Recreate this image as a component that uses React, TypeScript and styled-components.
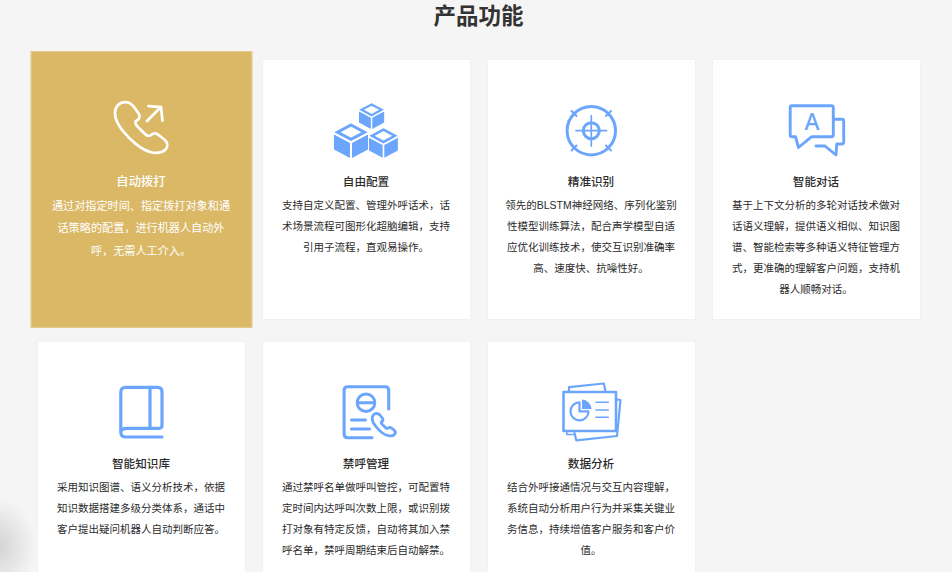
import React from 'react';
import styled, { createGlobalStyle } from 'styled-components';

const BLUE = '#6ba6fc';

const GlobalStyle = createGlobalStyle`
  html, body {
    margin: 0;
    padding: 0;
    background: #f5f5f5;
  }
  svg {
    overflow: visible;
  }
`;

const Page = styled.div`
  position: relative;
  width: 952px;
  height: 572px;
  overflow: hidden;
  background: #f5f5f5;
  font-family: "Liberation Sans", "Noto Sans CJK SC", sans-serif;
`;

const Section = styled.section`
  width: 883px;
  margin-left: 37px;
`;

const Heading = styled.h2`
  margin: 0;
  height: 59px;
  padding-top: 2px;
  box-sizing: border-box;
  text-align: center;
  font-size: 22.5px;
  line-height: 30px;
  font-weight: 700;
  color: #333;
`;

const Grid = styled.div`
  display: grid;
  grid-template-columns: repeat(4, 209px);
  grid-auto-rows: 261px;
  column-gap: 16px;
  row-gap: 21px;
`;

const Card = styled.article<{ $active?: boolean }>`
  box-sizing: border-box;
  padding: 40px 20px 0 19px;
  text-align: center;
  background: ${({ $active }) => ($active ? '#dbb866' : '#fff')};
  border: 1px solid ${({ $active }) => ($active ? '#e4cb8f' : '#f1f1f1')};
  color: ${({ $active }) => ($active ? '#fff' : '#2b2b2b')};
  transform: ${({ $active }) => ($active ? 'scale(1.06)' : 'none')};
`;

const IconWrap = styled.div`
  height: 60px;
  display: flex;
  justify-content: center;
`;

const Title = styled.h3`
  margin: 9px 0 0;
  font-size: 11.6px;
  line-height: 25px;
  font-weight: 500;
`;

const Body = styled.p`
  margin: 1px -3px 0;
  font-size: 10.5px;
  line-height: 21px;
  font-weight: 400;
`;

const CornerShade = styled.div`
  position: absolute;
  left: -40px;
  bottom: -22px;
  width: 76px;
  height: 96px;
  border-radius: 50%;
  background: radial-gradient(closest-side, #d4d4d4 0%, #e2e2e2 45%, #f5f5f5 100%);
`;

const phonePath =
  'M125 102C129 102 132 104 134 107L139 114C140.5 117 139 119.5 136 121C135 122 135.5 124 137 126L145 134C147 136 149 136.5 151 135C153 133.5 156 133 158 134.5L165 140C168 143 168 147 165.5 149.5C163 152 158 153.5 152 152.5C142 150.5 130 140 123 131C118 125 115 119 115 113C115 107 119 102 125 102Z';

const PhoneIcon = () => (
  <svg width="60" height="60" viewBox="109.2 94.6 63.6 63.6" fill="none" stroke="#fff" strokeLinecap="round" strokeLinejoin="round">
    <path d={phonePath} strokeWidth="2.7" />
    <path d="M147 121L161 107M148.5 106L161 107L162.5 120.5" strokeWidth="2.8" />
  </svg>
);

const Cube = ({ x, y, s }: { x: number; y: number; s: number }) => (
  <g transform={`translate(${x} ${y}) scale(${s})`}>
    <polygon points="17,2 30.5,9.2 17,16.4 3.5,9.2" fill="#fff" stroke={BLUE} strokeWidth="3" />
    <polygon points="0,11.5 16,20 16,35 0,26.5" fill={BLUE} />
    <polygon points="18,20 34,11.5 34,26.5 18,35" fill={BLUE} />
  </g>
);

const CubesIcon = () => (
  <svg width="60" height="60" viewBox="336 100 60 60">
    <Cube x={359} y={103} s={0.74} />
    <Cube x={334} y={123} s={1} />
    <Cube x={369} y={128} s={0.85} />
  </svg>
);

const TargetIcon = () => (
  <svg width="60" height="60" viewBox="561 100 60 60" fill="none" stroke={BLUE} strokeLinecap="round">
    <circle cx="591.3" cy="130.7" r="24.2" strokeWidth="3" />
    <circle cx="591.3" cy="130.7" r="8" strokeWidth="3" />
    <path d="M576 130.7H606.5M591.3 115.5V146" strokeWidth="1.7" />
    <path d="M571.5 111L576.5 116M611 111L606 116M571.5 150.5L576.5 145.5M611 150.5L606 145.5" strokeWidth="2" />
  </svg>
);

const ChatIcon = () => (
  <svg width="60" height="60" viewBox="786 100 60 60" fill="none" stroke={BLUE} strokeWidth="2.9" strokeLinecap="round" strokeLinejoin="round">
    <path d="M792 105.7H831.5Q833.3 105.7 833.3 107.5V135Q833.3 136.7 831.5 136.7H811.7L798.5 147.5L795.5 136.7H792Q790.2 136.7 790.2 135V107.5Q790.2 105.7 792 105.7Z" />
    <path d="M833.3 119.3H842Q843.7 119.3 843.7 121V142Q843.7 144 842 144H836.8L836 155L825 146H816" />
    <text x="812" y="130" textAnchor="middle" fontSize="23" fontWeight="500" fontFamily="'Noto Sans', sans-serif" fill={BLUE} stroke="none">
      A
    </text>
  </svg>
);

const BookIcon = () => (
  <svg width="60" height="60" viewBox="111 382 60 60" fill="none" stroke={BLUE} strokeWidth="3.2" strokeLinecap="round" strokeLinejoin="round">
    <path d="M162 437H126C123 437 120.8 435.5 120.8 432.5V392C120.8 389 122.8 387.3 125.5 387.3H157.5C160.5 387.3 162 389 162 392V425.5C162 427.5 161 428.3 159 428.3H127C123 428.3 120.8 430 120.8 432.5" />
    <path d="M150 387.3V428.3" />
  </svg>
);

const RecordIcon = () => (
  <svg width="60" height="60" viewBox="336 382 60 60" fill="none" stroke={BLUE} strokeLinecap="round" strokeLinejoin="round">
    <path d="M388.7 409V390.5Q388.7 386.8 385 386.8H347.8Q344.1 386.8 344.1 390.5V434Q344.1 437.7 347.8 437.7H372" strokeWidth="3.1" />
    <circle cx="366" cy="402.7" r="8.8" strokeWidth="3" />
    <path d="M358 402.7H374" strokeWidth="3" />
    <path d="M351.5 420H365.5M351.5 429H369.5" strokeWidth="3" />
    <g transform="translate(372.2 413.5) scale(0.44) translate(-115 -102)">
      <path d={phonePath} strokeWidth="6.4" />
    </g>
  </svg>
);

const ReportIcon = () => (
  <svg width="60" height="60" viewBox="561 382 60 60" fill="none" stroke={BLUE} strokeLinecap="round" strokeLinejoin="round">
    <rect x="563.5" y="392" width="52.5" height="39" strokeWidth="2.6" />
    <path d="M569 390.5V387.2L603.8 383.5L605.5 391" strokeWidth="2.2" />
    <path d="M617.5 399.6L620.5 400L617 436L576.3 440.3L574.5 433" strokeWidth="2.2" />
    <path d="M566.8 431.5V434.5H575" strokeWidth="1.6" />
    <path d="M579.5 402.4A9 9 0 1 0 588.5 411.4H579.5Z" strokeWidth="2.2" />
    <path d="M582 399.5A10 10 0 0 1 591.5 409H582Z" fill={BLUE} stroke="none" />
    <path d="M596 402.3H608.3M596 410H608.3M596 417.3H608.3" strokeWidth="1.6" />
  </svg>
);

const features = [
  {
    title: '自动拨打',
    text: '通过对指定时间、指定拨打对象和通话策略的配置，进行机器人自动外呼，无需人工介入。',
    icon: <PhoneIcon />,
    active: true,
  },
  {
    title: '自由配置',
    text: '支持自定义配置、管理外呼话术，话术场景流程可图形化超脑编辑，支持引用子流程，直观易操作。',
    icon: <CubesIcon />,
  },
  {
    title: '精准识别',
    text: '领先的BLSTM神经网络、序列化鉴别性模型训练算法，配合声学模型自适应优化训练技术，使交互识别准确率高、速度快、抗噪性好。',
    icon: <TargetIcon />,
  },
  {
    title: '智能对话',
    text: '基于上下文分析的多轮对话技术做对话语义理解，提供语义相似、知识图谱、智能检索等多种语义特征管理方式，更准确的理解客户问题，支持机器人顺畅对话。',
    icon: <ChatIcon />,
  },
  {
    title: '智能知识库',
    text: '采用知识图谱、语义分析技术，依据知识数据搭建多级分类体系，通话中客户提出疑问机器人自动判断应答。',
    icon: <BookIcon />,
  },
  {
    title: '禁呼管理',
    text: '通过禁呼名单做呼叫管控，可配置特定时间内达呼叫次数上限，或识别拨打对象有特定反馈，自动将其加入禁呼名单，禁呼周期结束后自动解禁。',
    icon: <RecordIcon />,
  },
  {
    title: '数据分析',
    text: '结合外呼接通情况与交互内容理解，系统自动分析用户行为并采集关键业务信息，持续增值客户服务和客户价值。',
    icon: <ReportIcon />,
  },
];

export default function App() {
  return (
    <Page>
      <GlobalStyle />
      <Section>
        <Heading>产品功能</Heading>
        <Grid>
          {features.map((item) => (
            <Card key={item.title} $active={item.active}>
              <IconWrap>{item.icon}</IconWrap>
              <Title>{item.title}</Title>
              <Body>{item.text}</Body>
            </Card>
          ))}
        </Grid>
      </Section>
      <CornerShade />
    </Page>
  );
}
